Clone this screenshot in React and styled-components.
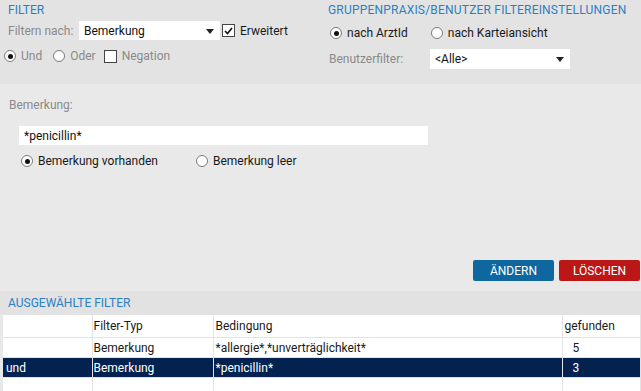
import React from 'react';
import styled, {createGlobalStyle} from 'styled-components';

const GlobalStyle = createGlobalStyle`
    body {
        margin: 0;
        font-family: Roboto, "Liberation Sans", sans-serif;
        font-size: 12px;
        color: #222;
        background: #e8e8e8;
    }
`;

const Page = styled.div`
    width: 641px;
    height: 391px;
    display: flex;
    flex-direction: column;
    overflow: hidden;
`;

// Filter options on top
const TopPanel = styled.div`
    height: 84px;
    flex: none;
    background: #e3e3e3;
    display: grid;
    grid-template-columns: 320px 1fr;
`;

const Column = styled.div`
    padding: 3px 0 0 ${p => p.$indent || 8}px;
    display: flex;
    flex-direction: column;
`;

const SectionTitle = styled.div`
    color: #2b7fc2;
    text-transform: uppercase;
    line-height: 14px;
    white-space: nowrap;
    letter-spacing: ${p => p.$wide ? '0.2px' : '0'};
`;

const Row = styled.div`
    display: flex;
    align-items: center;
    height: ${p => p.$h || 16}px;
    margin-top: ${p => p.$mt || 0}px;
    margin-left: ${p => p.$ml || 0}px;
`;

const Label = styled.span`
    color: #8a8a8a;
    width: ${p => p.$w ? `${p.$w}px` : 'auto'};
    flex: none;
    white-space: nowrap;
`;

const Select = styled.div`
    position: relative;
    width: ${p => p.$w}px;
    height: ${p => p.$h || 19}px;
    background: #fff;
    display: flex;
    align-items: center;
    padding-left: 5px;
    box-sizing: border-box;
    color: #111;
    &::after {
        content: '';
        position: absolute;
        right: 6px;
        top: 50%;
        margin-top: -2px;
        border-left: 4px solid transparent;
        border-right: 4px solid transparent;
        border-top: 5px solid #222;
    }
`;

const Choice = styled.label`
    display: flex;
    align-items: center;
    gap: 5px;
    margin-right: ${p => p.$mr || 0}px;
    color: ${p => p.$muted ? '#8a8a8a' : '#1a1a1a'};
    white-space: nowrap;
`;

const RadioDot = styled.span`
    width: 12px;
    height: 12px;
    box-sizing: border-box;
    border-radius: 50%;
    border: 1px solid #7a7a7a;
    background: #fff;
    display: flex;
    align-items: center;
    justify-content: center;
    flex: none;
    &::after {
        content: '';
        width: 5px;
        height: 5px;
        border-radius: 50%;
        background: ${p => p.$on ? '#111' : 'transparent'};
    }
`;

const CheckBox = styled.span`
    width: 13px;
    height: 13px;
    box-sizing: border-box;
    border: 1px solid #444;
    background: #fff;
    display: flex;
    align-items: center;
    justify-content: center;
    flex: none;
`;

const Radio = ({on, children, ...rest}) => (
    <Choice {...rest}>
        <RadioDot $on={on}/>
        {children}
    </Choice>
);

const Check = ({on, children, ...rest}) => (
    <Choice {...rest}>
        <CheckBox>
            {on && (
                <svg width="9" height="8" viewBox="0 0 9 8">
                    <path d="M1 4 L3.5 6.5 L8 1" stroke="#111" strokeWidth="1.6" fill="none"/>
                </svg>
            )}
        </CheckBox>
        {children}
    </Choice>
);

// Condition editor
const EditPanel = styled.div`
    flex: 1;
    background: #e9e9e9;
    padding: 14px 0 10px 9px;
    display: flex;
    flex-direction: column;
`;

const TextInput = styled.div`
    width: 409px;
    height: 19px;
    margin: 14px 0 0 10px;
    background: #fff;
    padding-left: 5px;
    box-sizing: border-box;
    display: flex;
    align-items: center;
    color: #111;
`;

const Actions = styled.div`
    margin-top: auto;
    display: flex;
    justify-content: flex-end;
    gap: 5px;
    padding-right: 1px;
`;

const Button = styled.button`
    width: 81px;
    height: 21px;
    border: none;
    border-radius: 2px;
    background: ${p => p.$danger ? '#bc1717' : '#0e679e'};
    color: #fff;
    font-family: inherit;
    font-size: 12px;
    text-transform: uppercase;
    padding: 0;
`;

// Selected filters list
const ListHeader = styled.div`
    height: 23px;
    flex: none;
    background: #e2e2e2;
    padding-left: 8px;
    display: flex;
    align-items: center;
`;

const TableWrap = styled.div`
    height: 77px;
    flex: none;
    padding-left: 3px;
    background: #e8e8e8;
    overflow: hidden;
`;

const Table = styled.table`
    width: 638px;
    border-collapse: collapse;
    background: #fff;
    table-layout: fixed;
`;

const Tr = styled.tr`
    height: ${p => p.$h || 20}px;
    background: ${p => p.$selected ? '#032250' : '#fff'};
    color: ${p => p.$selected ? '#fff' : '#1a1a1a'};
`;

const Td = styled.td`
    border: 1px solid #e3e3e3;
    padding: 0 0 0 ${p => p.$pad ?? 2}px;
    white-space: nowrap;
    overflow: hidden;
    &:first-child {
        border-left: none;
        padding-left: 3px;
    }
`;

const rows = [
    {op: '', type: 'Bemerkung', cond: '*allergie*,*unverträglichkeit*', found: '5'},
    {op: 'und', type: 'Bemerkung', cond: '*penicillin*', found: '3', selected: true},
    {op: '', type: '', cond: '', found: ''},
];

export default function App() {
    return (
        <Page>
            <GlobalStyle/>
            <TopPanel>
                <Column>
                    <SectionTitle>Filter</SectionTitle>
                    <Row $h={19} $mt={4}>
                        <Label $w={71}>Filtern nach:</Label>
                        <Select $w={141}>Bemerkung</Select>
                        <Check on style={{marginLeft: 2}}>Erweitert</Check>
                    </Row>
                    <Row $mt={8} $ml={-4}>
                        <Radio on $muted $mr={11}>Und</Radio>
                        <Radio $muted $mr={8}>Oder</Radio>
                        <Check $muted>Negation</Check>
                    </Row>
                </Column>
                <Column>
                    <SectionTitle $wide>Gruppenpraxis/Benutzer Filtereinstellungen</SectionTitle>
                    <Row $mt={8} $ml={2}>
                        <Radio on $mr={23}>nach ArztId</Radio>
                        <Radio>nach Karteiansicht</Radio>
                    </Row>
                    <Row $h={20} $mt={8} $ml={1}>
                        <Label $w={101}>Benutzerfilter:</Label>
                        <Select $w={140} $h={20}>&lt;Alle&gt;</Select>
                    </Row>
                </Column>
            </TopPanel>
            <EditPanel>
                <Label>Bemerkung:</Label>
                <TextInput>*penicillin*</TextInput>
                <Row $mt={8} $ml={12}>
                    <Radio on $mr={38}>Bemerkung vorhanden</Radio>
                    <Radio>Bemerkung leer</Radio>
                </Row>
                <Actions>
                    <Button>Ändern</Button>
                    <Button $danger>Löschen</Button>
                </Actions>
            </EditPanel>
            <ListHeader>
                <SectionTitle>Ausgewählte Filter</SectionTitle>
            </ListHeader>
            <TableWrap>
                <Table>
                    <colgroup>
                        <col style={{width: 89}}/>
                        <col style={{width: 121}}/>
                        <col style={{width: 349}}/>
                        <col/>
                    </colgroup>
                    <tbody>
                        <Tr $h={23}>
                            <Td/>
                            <Td $pad={1}>Filter-Typ</Td>
                            <Td>Bedingung</Td>
                            <Td>gefunden</Td>
                        </Tr>
                        {rows.map((r, i) => (
                            <Tr key={i} $selected={r.selected}>
                                <Td>{r.op}</Td>
                                <Td $pad={1}>{r.type}</Td>
                                <Td>{r.cond}</Td>
                                <Td $pad={10}>{r.found}</Td>
                            </Tr>
                        ))}
                    </tbody>
                </Table>
            </TableWrap>
        </Page>
    );
}
